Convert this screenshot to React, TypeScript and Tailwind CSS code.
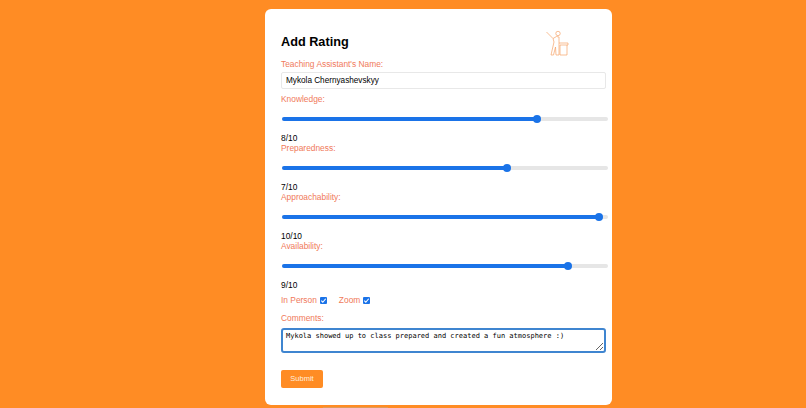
import React from "react";

const ratings = [
  { label: "Knowledge:", value: 8, pos: 78.2 },
  { label: "Preparedness:", value: 7, pos: 69 },
  { label: "Approachability:", value: 10, pos: 97.1 },
  { label: "Availability:", value: 9, pos: 87.7 },
];

function RatingSlider({ label, value, pos }: { label: string; value: number; pos: number }) {
  return (
    <div className="flex flex-col">
      <label className="h-[10px] text-[8.4px] leading-[10px] text-[#f0795a]">{label}</label>
      <div className="mt-[9px] ml-[1px] flex h-[12px] w-[326px] items-center">
        <div className="relative h-[4px] w-full rounded-full bg-[#e6e6e6]">
          <div className="h-full rounded-full bg-[#1a73e8]" style={{ width: `${pos}%` }} />
          <div
            className="absolute top-[-2px] ml-[-4px] h-[8px] w-[8px] rounded-full bg-[#1a73e8]"
            style={{ left: `${pos}%` }}
          />
        </div>
      </div>
      <div className="mt-[9px] h-[9px] text-[8.4px] leading-[9px] text-black">{value}/10</div>
    </div>
  );
}

function Check({ label }: { label: string }) {
  return (
    <div className="flex items-center gap-[3px]">
      <span className="text-[8.4px] leading-[10px] text-[#f0795a]">{label}</span>
      <span className="flex h-[7px] w-[7px] items-center justify-center rounded-[1px] bg-[#1a73e8]">
        <svg viewBox="0 0 8 8" className="h-[7px] w-[7px]">
          <path d="M1.5 4.2 L3.2 6 L6.5 2" fill="none" stroke="white" strokeWidth="1.3" />
        </svg>
      </span>
    </div>
  );
}

export default function App() {
  return (
    <div className="h-[408px] w-[806px] overflow-hidden bg-[#ff8c24] pt-[9px] font-['Liberation_Sans',sans-serif]">
      <div className="ml-[265px] h-[396px] w-[347px] rounded-[6px] bg-white pl-[16px] pr-[7px] pt-[25px]">
        {/* Header */}
        <div className="flex h-[24px] items-start justify-between">
          <h1 className="text-[12.7px] leading-[16px] font-bold text-black">Add Rating</h1>
          <svg
            viewBox="0 0 25 27"
            className="mr-[34px] mt-[-5px] h-[27px] w-[25px]"
            fill="none"
            stroke="#f7a468"
            strokeWidth="0.7"
          >
            <path d="M0.5 3 L7 9.5 L10.5 7.5 L13 8 L13 14 M7 9.5 L8 13 L5 26 H7.5 L9.5 18 L10 26 H13 V14" />
            <circle cx="12" cy="4.5" r="2.2" />
            <path d="M13 14 H22 V16 H14 V26 H21 V16" />
          </svg>
        </div>

        <label className="block h-[12px] text-[8.4px] leading-[12px] text-[#f0795a]">
          Teaching Assistant's Name:
        </label>
        <input
          readOnly
          value="Mykola Chernyashevskyy"
          className="mt-[2px] block h-[17px] w-[325px] rounded-[2px] border border-[#e8e8e8] px-[4px] text-[8.2px] text-black outline-none"
        />

        <div className="mt-[5px] flex flex-col">
          {ratings.map((r) => (
            <RatingSlider key={r.label} {...r} />
          ))}
        </div>

        <div className="mt-[3px] flex h-[14px] items-center gap-[12px]">
          <Check label="In Person" />
          <Check label="Zoom" />
        </div>

        <label className="mt-[5px] block h-[12px] text-[8.4px] leading-[12px] text-[#f0795a]">
          Comments:
        </label>
        <textarea
          readOnly
          value="Mykola showed up to class prepared and created a fun atmosphere :)"
          className="mt-[4px] block h-[25px] w-[325px] rounded-[3px] border-2 border-[#3f85d0] px-[3px] py-[1px] font-['DejaVu_Sans_Mono',monospace] text-[7px] leading-[10px] text-black outline-none"
        />

        <button className="mt-[17px] block h-[18px] w-[42px] rounded-[2px] bg-[#ff8c24] text-[7.5px] text-[#ffeedd]">
          Submit
        </button>
      </div>
      <div className="ml-[323px] mt-[2px] h-[1px] w-[65px] bg-[#e09a5a]" />
    </div>
  );
}
